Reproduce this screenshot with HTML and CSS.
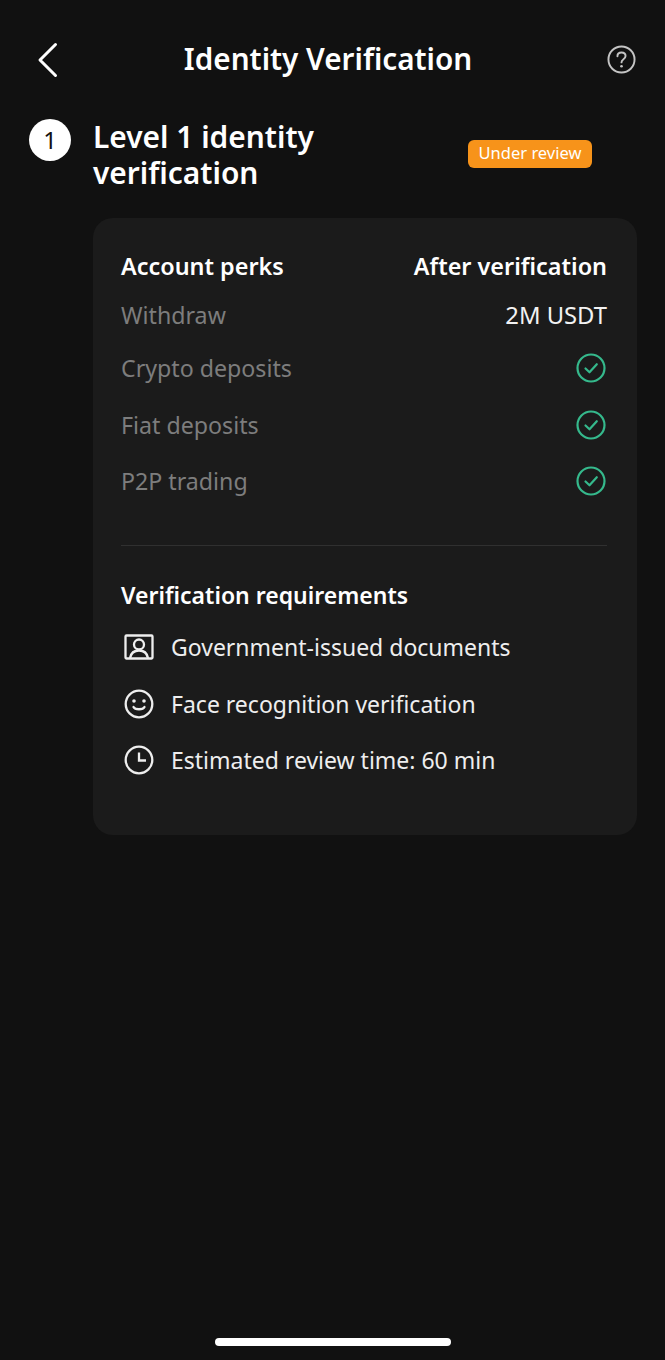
FILE: index.html
```html
<!DOCTYPE html>
<html lang="en">
<head>
<meta charset="utf-8">
<title>Identity Verification</title>
<link rel="stylesheet" href="styles.css">
</head>
<body>
<div class="page">
  <header class="nav">
    <svg class="back" viewBox="0 0 24 36" width="24" height="36"><path d="M19.5 2.5 L4 18 L19.5 33.5" fill="none" stroke="#fff" stroke-width="3" stroke-linecap="round" stroke-linejoin="round"/></svg>
    <h1 class="nav-title">Identity Verification</h1>
    <svg class="help" viewBox="0 0 30 30" width="29" height="29"><circle cx="15" cy="15" r="13.5" fill="none" stroke="#c4c4c4" stroke-width="2"/><path d="M10.8 11.6 C10.8 9.2 12.7 7.8 15 7.8 C17.4 7.8 19.2 9.3 19.2 11.5 C19.2 13.4 18 14.2 16.8 15 C15.6 15.8 15 16.5 15 18" fill="none" stroke="#c4c4c4" stroke-width="2" stroke-linecap="round"/><circle cx="15" cy="22" r="1.4" fill="#c4c4c4"/></svg>
  </header>

  <section class="level">
    <div class="step">1</div>
    <h2 class="level-title">Level 1 identity verification</h2>
    <span class="badge">Under review</span>
  </section>

  <section class="card">
    <div class="row head-row">
      <span class="head">Account perks</span>
      <span class="head">After verification</span>
    </div>
    <div class="row withdraw">
      <span class="label">Withdraw</span>
      <span class="value">2M USDT</span>
    </div>
    <div class="row perk">
      <span class="label">Crypto deposits</span>
      <svg class="check" viewBox="0 0 30 30" width="30" height="30"><circle cx="15" cy="15" r="13.5" fill="none" stroke="#35b98c" stroke-width="2.2"/><path d="M9.5 15.5 L13.5 19.3 L20.8 11.2" fill="none" stroke="#35b98c" stroke-width="2.2" stroke-linecap="round" stroke-linejoin="round"/></svg>
    </div>
    <div class="row perk">
      <span class="label">Fiat deposits</span>
      <svg class="check" viewBox="0 0 30 30" width="30" height="30"><circle cx="15" cy="15" r="13.5" fill="none" stroke="#35b98c" stroke-width="2.2"/><path d="M9.5 15.5 L13.5 19.3 L20.8 11.2" fill="none" stroke="#35b98c" stroke-width="2.2" stroke-linecap="round" stroke-linejoin="round"/></svg>
    </div>
    <div class="row perk">
      <span class="label">P2P trading</span>
      <svg class="check" viewBox="0 0 30 30" width="30" height="30"><circle cx="15" cy="15" r="13.5" fill="none" stroke="#35b98c" stroke-width="2.2"/><path d="M9.5 15.5 L13.5 19.3 L20.8 11.2" fill="none" stroke="#35b98c" stroke-width="2.2" stroke-linecap="round" stroke-linejoin="round"/></svg>
    </div>
    <div class="divider"></div>
    <div class="req-head">Verification requirements</div>
    <div class="req">
      <svg class="req-icon" viewBox="0 0 30 30" width="30" height="30"><rect x="1.5" y="3.5" width="27" height="23" fill="none" stroke="#eee" stroke-width="2.3" rx="1"/><circle cx="15" cy="12.5" r="5" fill="none" stroke="#eee" stroke-width="2.3"/><path d="M6 26 C7 21 10.5 18.5 15 18.5 C19.5 18.5 23 21 24 26" fill="none" stroke="#eee" stroke-width="2.3"/></svg>
      <span>Government-issued documents</span>
    </div>
    <div class="req">
      <svg class="req-icon" viewBox="0 0 30 30" width="30" height="30"><circle cx="15" cy="15" r="13.3" fill="none" stroke="#eee" stroke-width="2.3"/><circle cx="10" cy="12" r="1.8" fill="#eee"/><circle cx="20" cy="12" r="1.8" fill="#eee"/><path d="M9.5 18 C11 21 19 21 20.5 18" fill="none" stroke="#eee" stroke-width="2.3" stroke-linecap="round"/></svg>
      <span>Face recognition verification</span>
    </div>
    <div class="req">
      <svg class="req-icon" viewBox="0 0 30 30" width="30" height="30"><circle cx="15" cy="15" r="13.3" fill="none" stroke="#eee" stroke-width="2.3"/><path d="M15 7.5 V15.5 H22" fill="none" stroke="#eee" stroke-width="2.3"/></svg>
      <span>Estimated review time: 60 min</span>
    </div>
  </section>
  <div class="home-bar"></div>
</div>
</body>
</html>
```
FILE: styles.css
```css
* { box-sizing: border-box; margin: 0; padding: 0; }
html, body { background: #111111; }
body { font-family: "Noto Sans", "Open Sans", sans-serif; color: #fff; }
.page { position: relative; width: 665px; height: 1360px; overflow: hidden; padding-top: 40px; }

.nav { display: flex; align-items: center; justify-content: space-between; height: 40px; padding: 0 29px 0 36px; }
.back { display: block; }
.help { display: block; margin-bottom: 1px; }
.nav-title { font-size: 29.7px; font-weight: 600; line-height: 38px; padding: 0 11px 2px 0; }

.level { display: flex; align-items: center; margin-top: 39px; padding-left: 29px; }
.step { flex: none; width: 42px; height: 42px; border-radius: 50%; background: #fff; color: #111; font-size: 24px; font-weight: 400; line-height: 42px; text-align: center; align-self: flex-start; }
.level-title { flex: none; width: 375px; margin-left: 22px; font-size: 29.9px; font-weight: 600; line-height: 36px; }
.badge { flex: none; width: 124px; height: 28px; border-radius: 6px; background: #f7931a; color: #fff; font-size: 16.5px; line-height: 26px; text-align: center; margin-top: -2px; }

.card { margin: 27px 28px 0 93px; height: 617px; border-radius: 20px; background: #1b1b1b; padding: 29px 30px 0 28px; }
.row { display: flex; align-items: center; justify-content: space-between; }
.head-row { height: 38px; }
.head { font-size: 23.4px; font-weight: 600; line-height: 38px; }
.withdraw { height: 38px; margin-top: 11px; }
.perk { height: 38px; margin-top: 18.5px; }
.withdraw + .perk { margin-top: 15px; }
.label { font-size: 23.2px; line-height: 38px; color: #7d7d7d; }
.value { font-size: 23.8px; line-height: 38px; color: #f2f2f2; }
.check { display: block; margin-right: 1px; }

.divider { height: 1px; background: #303030; margin-top: 45px; }
.req-head { margin-top: 30px; font-size: 23px; font-weight: 600; line-height: 38px; }
.req { display: flex; align-items: center; gap: 17px; height: 38px; margin-top: 18.5px; font-size: 23px; line-height: 38px; color: #eeeeee; padding-left: 3px; }
.req-head + .req { margin-top: 14px; }
.req-icon { display: block; flex: none; }

.home-bar { position: absolute; left: 215px; top: 1338px; width: 236px; height: 8px; border-radius: 4px; background: #fff; }
```
